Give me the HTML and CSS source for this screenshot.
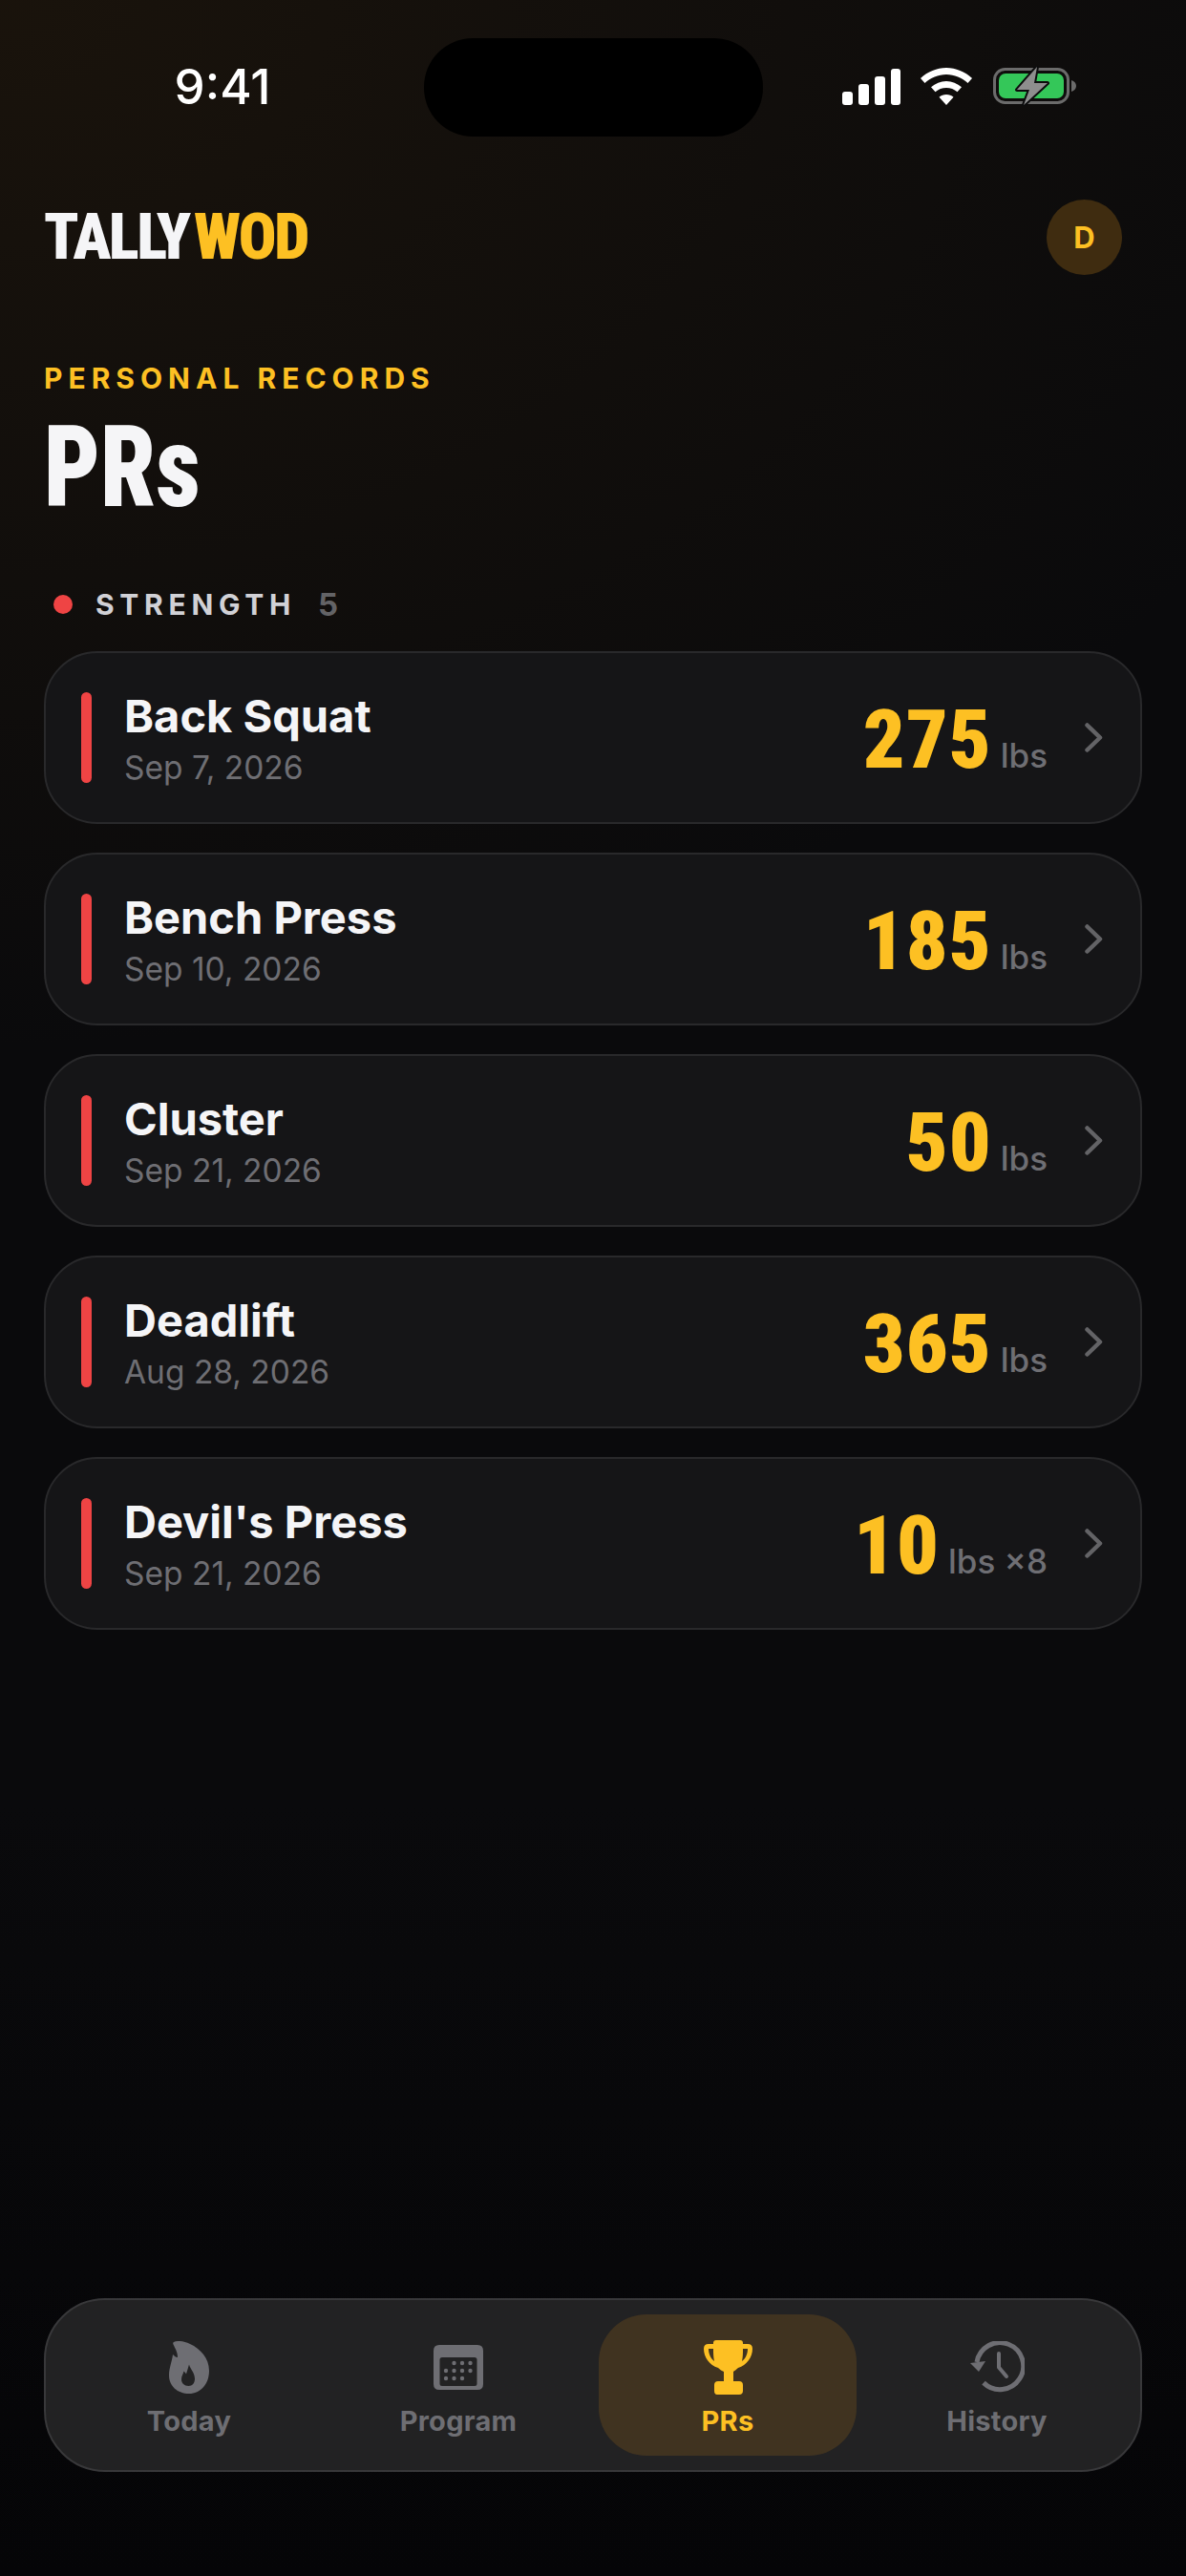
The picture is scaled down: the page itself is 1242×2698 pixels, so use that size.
FILE: index.html
```html
<!DOCTYPE html>
<html lang="en">
<head>
    <meta charset="UTF-8">
    <meta name="viewport" content="width=device-width, initial-scale=1.0">
    <title>TallyWOD - PRs</title>
    <link rel="stylesheet" href="styles.css">
</head>
<body>
    <div class="status-bar">
        <span class="hora">9:41</span>
        <div class="island"></div>
        <div class="status-icons">
            <svg class="ico-signal" viewBox="0 0 61 38"><rect x="0" y="24" width="11" height="14" rx="3"/><rect x="17" y="16" width="11" height="22" rx="3"/><rect x="34" y="8" width="11" height="30" rx="3"/><rect x="51" y="0" width="10" height="38" rx="3"/></svg>
            <svg class="ico-wifi" viewBox="0 0 54 39"><path d="M27 0C37 0 46.500 4 54 11L49.500 16C43.500 10.500 35.500 7 27 7S10.500 10.500 4.500 16L0 11C7.500 4 17 0 27 0Z"/><path d="M27 14C33 14 38.500 16.300 43 20.300L38.500 25.300C35.300 22.500 31.300 21 27 21S18.700 22.500 15.500 25.300L11 20.300C15.500 16.300 21 14 27 14Z"/><path d="M27 28C30 28 32.500 29 34.500 30.800L27 39L19.500 30.800C21.500 29 24 28 27 28Z"/></svg>
            <svg class="ico-battery" viewBox="0 0 87 42"><rect x="1.500" y="3.500" width="77" height="35" rx="11" fill="none" stroke="#6b6b6b" stroke-width="3"/><path d="M82 15C85 16 87 18 87 21S85 26 82 27Z" fill="#6b6b6b"/><rect x="6" y="8" width="68" height="26" rx="7" fill="#34c759"/><path d="M46 1L25 25H38L32 41L57 18H43Z" fill="#8e8e8e" stroke="#0c0c0d" stroke-width="4" stroke-linejoin="round" paint-order="stroke"/></svg>
        </div>
    </div>

    <div class="header">
        <div class="logo"><span>TALLY</span><span class="logo-wod">WOD</span></div>
        <div class="avatar">D</div>
    </div>

    <div class="titulo-area">
        <div class="sobre-titulo">PERSONAL RECORDS</div>
        <h1>PRs</h1>
    </div>

    <div class="secao">
        <span class="secao-ponto"></span>
        <span class="secao-nome">STRENGTH</span>
        <span class="secao-total">5</span>
    </div>

    <div class="lista">
        <div class="card">
            <span class="card-barra"></span>
            <div class="card-texto">
                <div class="card-nome">Back Squat</div>
                <div class="card-data">Sep 7, 2026</div>
            </div>
            <div class="card-valor"><span class="valor">275</span><span class="unidade">lbs</span></div>
            <svg class="chevron" viewBox="0 0 19 31"><path d="M2.500 2.500L16 15.500L2.500 28.500"/></svg>
        </div>
        <div class="card">
            <span class="card-barra"></span>
            <div class="card-texto">
                <div class="card-nome">Bench Press</div>
                <div class="card-data">Sep 10, 2026</div>
            </div>
            <div class="card-valor"><span class="valor">185</span><span class="unidade">lbs</span></div>
            <svg class="chevron" viewBox="0 0 19 31"><path d="M2.500 2.500L16 15.500L2.500 28.500"/></svg>
        </div>
        <div class="card">
            <span class="card-barra"></span>
            <div class="card-texto">
                <div class="card-nome">Cluster</div>
                <div class="card-data">Sep 21, 2026</div>
            </div>
            <div class="card-valor"><span class="valor">50</span><span class="unidade">lbs</span></div>
            <svg class="chevron" viewBox="0 0 19 31"><path d="M2.500 2.500L16 15.500L2.500 28.500"/></svg>
        </div>
        <div class="card">
            <span class="card-barra"></span>
            <div class="card-texto">
                <div class="card-nome">Deadlift</div>
                <div class="card-data">Aug 28, 2026</div>
            </div>
            <div class="card-valor"><span class="valor">365</span><span class="unidade">lbs</span></div>
            <svg class="chevron" viewBox="0 0 19 31"><path d="M2.500 2.500L16 15.500L2.500 28.500"/></svg>
        </div>
        <div class="card">
            <span class="card-barra"></span>
            <div class="card-texto">
                <div class="card-nome">Devil's Press</div>
                <div class="card-data">Sep 21, 2026</div>
            </div>
            <div class="card-valor"><span class="valor">10</span><span class="unidade">lbs ×8</span></div>
            <svg class="chevron" viewBox="0 0 19 31"><path d="M2.500 2.500L16 15.500L2.500 28.500"/></svg>
        </div>
    </div>

    <div class="nav">
        <div class="nav-item">
            <div class="nav-ico"><svg class="ico-today" viewBox="0 0 42 55"><path fill-rule="evenodd" d="M5 1C9-1 16 0 22 3C33 8 42 18 42 31C42 45 33 55 21 55C9 55 0 47 0 36C0 28 3 22 4 14C6 16 7 17 9 17C9 11 6 7 4.500 3.500C4 2.500 4 1.500 5 1ZM21 24.500C22 29 27 33 27 39.500C27 44 24.500 47 20.500 47C16 47 13 44 13 40C13 36.500 15 34 15.500 31.500C16.500 32.500 17.500 33.500 18 34.500C19 31 20 28 21 24.500Z"/></svg></div>
            <span>Today</span>
        </div>
        <div class="nav-item">
            <div class="nav-ico"><svg class="ico-program" viewBox="0 0 52 47"><path fill-rule="evenodd" d="M6 0H46Q52 0 52 6V41Q52 47 46 47H6Q0 47 0 41V6Q0 0 6 0ZM9 13Q6.500 13 6.500 15.500V40.500Q6.500 43 9 43H43Q45.500 43 45.500 40.500V15.500Q45.500 13 43 13Z"/><circle cx="21.500" cy="19" r="2.200"/><circle cx="30" cy="19" r="2.200"/><circle cx="38.500" cy="19" r="2.200"/><circle cx="13" cy="27" r="2.200"/><circle cx="21.500" cy="27" r="2.200"/><circle cx="30" cy="27" r="2.200"/><circle cx="38.500" cy="27" r="2.200"/><circle cx="13" cy="35" r="2.200"/><circle cx="21.500" cy="35" r="2.200"/><circle cx="30" cy="35" r="2.200"/></svg></div>
            <span>Program</span>
        </div>
        <div class="nav-item ativo">
            <div class="nav-ico"><svg class="ico-prs" viewBox="0 0 51 57"><path fill-rule="evenodd" d="M13 0H38Q41 0 41 3V4H46Q51 4 51 9C51 18 45 26 36 29C34 31 32 32 31 33V43H37Q41 43 41 47V53Q41 57 37 57H14Q11 57 11 53V47Q11 43 15 43H21V33C19 32 17 31 15 29C6 26 0 18 0 9Q0 4 5 4H10V3Q10 0 13 0ZM5 9C5 14 7 19 11 22C10 18 10 13 10 9ZM46 9H41C41 13 41 18 40 22C44 19 46 14 46 9Z"/></svg></div>
            <span>PRs</span>
        </div>
        <div class="nav-item">
            <div class="nav-ico"><svg class="ico-history" viewBox="0 0 57 54"><path class="traco" d="M14 43.600A24.500 24.500 0 1 0 7 22"/><path d="M0 23L16 21L9 32Z"/><path class="traco fino" d="M30 13V27.500L38 37"/></svg></div>
            <span>History</span>
        </div>
    </div>
</body>
</html>
```

FILE: styles.css
```css
* {
    box-sizing: border-box;
}

html, body {
    height: 100%;
}

body {
    margin: 0;
    height: 2698px;
    overflow: hidden;
    display: flex;
    flex-direction: column;
    font-family: Inter, "Noto Sans", sans-serif;
    color: #f5f5f7;
    background-color: #0a0a0c;
    background-image:
        radial-gradient(ellipse 1500px 1100px at 0 0, rgba(70, 45, 12, 0.26), rgba(70, 45, 12, 0) 100%),
        linear-gradient(180deg, #0a0a0c 0%, #0a0a0c 70%, #050507 100%);
}

/* barra de status */
.status-bar {
    display: grid;
    grid-template-columns: 444px 355px 1fr;
    height: 143px;
    padding-top: 40px;
}

.hora {
    font-size: 51px;
    font-weight: 500;
    line-height: 102px;
    text-align: center;
    padding-left: 22px;
    color: #fff;
}

.island {
    background-color: #000;
    border-radius: 51px;
    height: 103px;
}

.status-icons {
    display: flex;
    align-items: flex-start;
    padding: 30px 0 0 83px;
    fill: #fff;
}

.ico-signal {
    width: 61px;
    height: 38px;
    margin-top: 2px;
}

.ico-wifi {
    width: 54px;
    height: 39px;
    margin: 1px 0 0 21px;
}

.ico-battery {
    width: 87px;
    height: 42px;
    margin: -1px 0 0 22px;
}

/* topo */
.header {
    display: flex;
    justify-content: space-between;
    align-items: center;
    padding: 66px 67px 0 46px;
}

.logo {
    font-family: Roboto, "Liberation Sans Narrow", sans-serif;
    font-stretch: 75%;
    font-weight: 900;
    font-size: 66px;
    letter-spacing: -2.3px;
    line-height: 79px;
    color: #f5f5f7;
}

.logo-wod {
    margin-left: 5px;
    color: #fdc023;
}

.avatar {
    width: 79px;
    height: 79px;
    border-radius: 50%;
    background-color: #3f2c10;
    color: #fdc023;
    font-size: 31px;
    font-weight: 700;
    line-height: 79px;
    text-align: center;
}

.titulo-area {
    padding: 0 46px;
    margin-top: 90px;
}

.sobre-titulo {
    font-size: 30px;
    font-weight: 700;
    letter-spacing: 0.2em;
    line-height: 36px;
    color: #fdc023;
}

h1 {
    display: inline-block;
    margin: 21px 0 0;
    font-family: Roboto, "Liberation Sans Narrow", sans-serif;
    font-stretch: 75%;
    font-weight: 900;
    font-size: 118px;
    line-height: 110px;
    color: #f5f5f7;
    transform: scaleX(0.87);
    transform-origin: left center;
}

.secao {
    display: flex;
    align-items: center;
    margin-top: 70px;
    padding-left: 56px;
    height: 36px;
}

.secao-ponto {
    width: 20px;
    height: 20px;
    border-radius: 50%;
    background-color: #ef4444;
}

.secao-nome {
    margin-left: 24px;
    font-size: 30px;
    font-weight: 700;
    letter-spacing: 0.19em;
    color: #d1d1d6;
}

.secao-total {
    margin-left: 23px;
    font-size: 33px;
    font-weight: 700;
    color: #636366;
}

/* lista de recordes */
.lista {
    display: flex;
    flex-direction: column;
    gap: 30px;
    margin-top: 31px;
    padding: 0 46px;
}

.card {
    display: flex;
    align-items: center;
    height: 181px;
    padding: 0 39px 0 37px;
    background-color: #151517;
    border: 2px solid #29292b;
    border-radius: 56px;
}

.card-barra {
    width: 11px;
    height: 95px;
    border-radius: 6px;
    background-color: #ef4444;
}

.card-texto {
    flex: 1;
    margin-left: 34px;
}

.card-nome {
    font-size: 47px;
    font-weight: 650;
    line-height: 56px;
    color: #f5f5f7;
}

.card-data {
    margin-top: 6px;
    font-size: 33.500px;
    line-height: 40px;
    color: #6e6e73;
}

.card-valor {
    display: flex;
    align-items: baseline;
    gap: 9px;
    margin-top: 5px;
}

.valor {
    font-family: Roboto, "Liberation Sans Narrow", sans-serif;
    font-stretch: 75%;
    font-weight: 900;
    font-size: 86px;
    letter-spacing: 1px;
    line-height: 90px;
    color: #fdc023;
}

.unidade {
    font-size: 35px;
    font-weight: 500;
    color: #6e6e73;
}

.chevron {
    width: 19px;
    height: 31px;
    margin-left: 39px;
    fill: none;
    stroke: #636366;
    stroke-width: 4.500;
    stroke-linecap: round;
    stroke-linejoin: round;
}

/* navegacao inferior */
.nav {
    display: grid;
    grid-template-columns: repeat(4, 1fr);
    gap: 12px;
    height: 182px;
    margin: auto 46px 109px;
    padding: 15px;
    background-color: #222223;
    border: 2px solid #38383a;
    border-radius: 64px;
}

.nav-item {
    display: flex;
    flex-direction: column;
    align-items: center;
    justify-content: flex-end;
    padding-bottom: 18px;
    border-radius: 50px;
    font-size: 29px;
    font-weight: 700;
    letter-spacing: 0.01em;
    line-height: 36px;
    color: #6e6e73;
    fill: #6e6e73;
}

.nav-ico {
    display: flex;
    align-items: center;
    justify-content: center;
    height: 58px;
    margin-bottom: 10px;
}

.nav-item.ativo {
    background-color: #403320;
    color: #fdc023;
    fill: #fdc023;
}

.ico-today {
    width: 42px;
    height: 55px;
}

.ico-program {
    width: 52px;
    height: 47px;
}

.ico-prs {
    width: 51px;
    height: 57px;
}

.ico-history {
    width: 57px;
    height: 54px;
}

.traco {
    fill: none;
    stroke: #6e6e73;
    stroke-width: 5;
}

.traco.fino {
    stroke-width: 4;
    stroke-linecap: round;
    stroke-linejoin: round;
}
```
